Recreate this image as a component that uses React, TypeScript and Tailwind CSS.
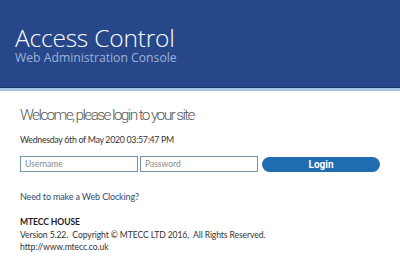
export default function App() {
  return (
    <div className="w-[400px] h-[270px] overflow-hidden bg-white font-['Lato','Liberation_Sans',sans-serif]">
      <header className="h-[91px] bg-[#26478a] border-b-[3px] border-b-[#a9c4e4] shadow-[inset_0_-1px_0_#1b3566] px-[15px] pt-[25px] font-['Open_Sans','Liberation_Sans',sans-serif]">
        <h1 className="text-[24.5px] leading-[25px] font-light tracking-[-0.2px] text-white">Access Control</h1>
        <p className="mt-[1px] text-[12.2px] leading-[14px] text-[#9fb3d8]">Web Administration Console</p>
      </header>

      <main className="px-[20px] pt-[14px]">
        <h2 className="text-[15.5px] leading-[21px] font-light tracking-[-1.65px] text-[#5a5a5a] font-['Roboto','Lato',sans-serif]">
          Welcome, please login to your site
        </h2>
        <p className="mt-[8px] text-[8.8px] leading-[11px] tracking-[-0.3px] text-[#333]">
          Wednesday 6th of May 2020 03:57:47 PM
        </p>

        <form className="mt-[11px] flex items-center gap-[2px]">
          <input
            placeholder="Username"
            className="w-[118px] h-[16px] border border-[#6f97a3] px-[4px] text-[8.5px] text-[#333] placeholder:text-[#8a8a8a] outline-none"
          />
          <input
            type="password"
            placeholder="Password"
            className="w-[118px] h-[16px] border border-[#6f97a3] px-[4px] text-[8.5px] text-[#333] placeholder:text-[#8a8a8a] outline-none"
          />
          <button
            type="button"
            className="ml-[2px] w-[118px] h-[15px] rounded-full bg-[#1f6cb0] text-white text-[10px] leading-[15px] font-bold font-['Roboto','Liberation_Sans',sans-serif]"
          >
            Login
          </button>
        </form>

        <p className="mt-[19px] text-[9px] leading-[11px] tracking-[-0.15px] text-[#2f4a6e]">Need to make a Web Clocking?</p>

        <div className="mt-[14px] text-[8.6px] leading-[12.5px] tracking-[-0.1px] text-[#333]">
          <p className="font-bold text-[#222]">MTECC HOUSE</p>
          <p>Version 5.22.&nbsp; Copyright © MTECC LTD 2016,&nbsp; All Rights Reserved.</p>
          <p>http://www.mtecc.co.uk</p>
        </div>
      </main>
    </div>
  );
}
